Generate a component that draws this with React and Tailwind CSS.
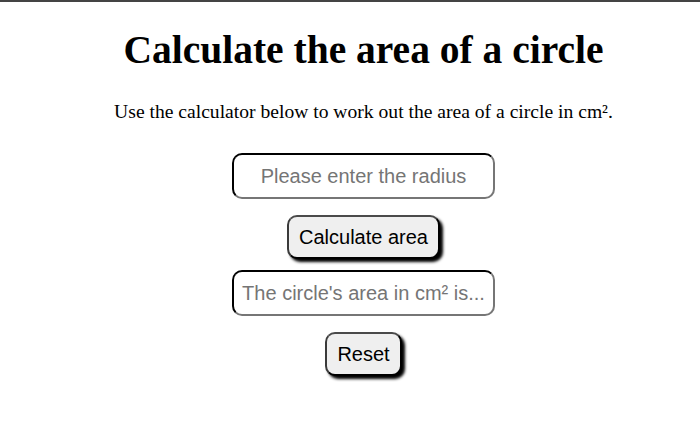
import React from "react";

export default function App() {
  return (
    <div className="w-[700px] h-[435px] bg-white border-t-2 border-[#444] flex flex-col items-center pl-[27px] overflow-hidden">
      <h1 className="mt-[25px] text-[39.5px] leading-[46px] font-bold text-black whitespace-nowrap [font-family:Liberation_Serif,'Times_New_Roman',serif]">
        Calculate the area of a circle
      </h1>
      <p className="mt-[27px] text-[19.6px] leading-[23px] text-black whitespace-nowrap [font-family:Liberation_Serif,'Times_New_Roman',serif]">
        Use the calculator below to work out the area of a circle in cm².
      </p>
      <input
        type="text"
        placeholder="Please enter the radius"
        className="mt-[30px] w-[263px] h-[46px] rounded-[10px] border-2 border-t-black border-l-black border-r-[#767676] border-b-[#767676] bg-white px-[6px] text-center text-[20px] placeholder:text-[#757575] outline-none [font-family:Liberation_Sans,Arial,sans-serif]"
      />
      <button className="mt-[16px] h-[44px] px-[10px] rounded-[10px] border-2 border-t-[#4a4a4a] border-l-[#3a3a3a] border-r-black border-b-black bg-[#efefef] shadow-[3px_3px_3px_#000] text-[20px] leading-[24px] text-black [font-family:Liberation_Sans,Arial,sans-serif]">
        Calculate area
      </button>
      <input
        type="text"
        placeholder="The circle's area in cm² is..."
        className="mt-[11px] w-[263px] h-[46px] rounded-[10px] border-2 border-t-black border-l-black border-r-[#767676] border-b-[#767676] bg-white px-[6px] text-center text-[20px] placeholder:text-[#757575] outline-none [font-family:Liberation_Sans,Arial,sans-serif]"
      />
      <button className="mt-[16px] h-[44px] px-[10px] rounded-[10px] border-2 border-t-[#4a4a4a] border-l-[#3a3a3a] border-r-black border-b-black bg-[#efefef] shadow-[3px_3px_3px_#000] text-[20px] leading-[24px] text-black [font-family:Liberation_Sans,Arial,sans-serif]">
        Reset
      </button>
    </div>
  );
}
